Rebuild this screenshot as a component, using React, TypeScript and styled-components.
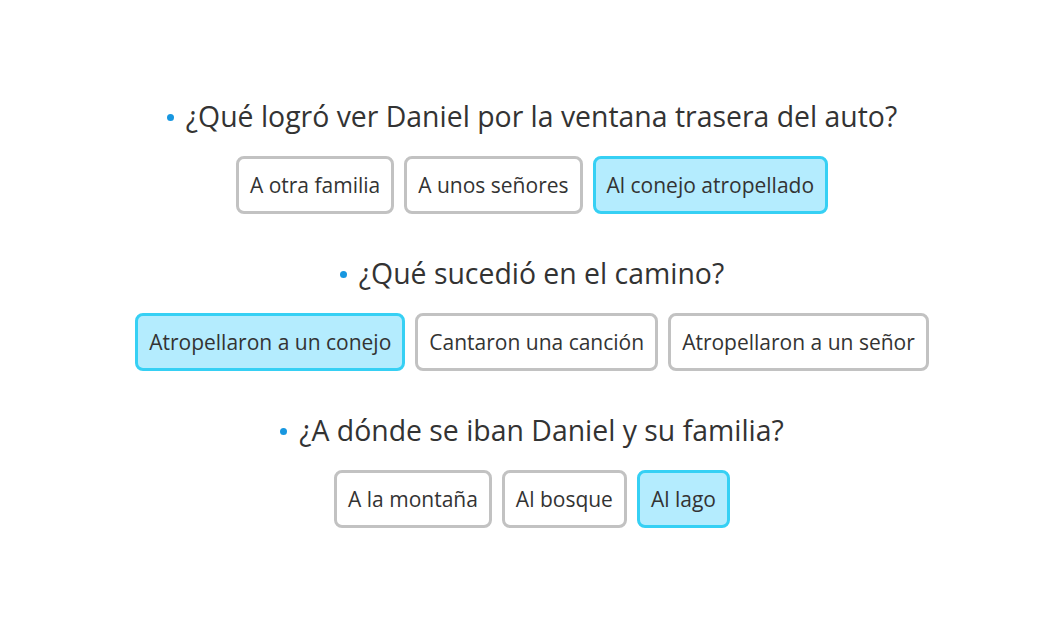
import styled, { createGlobalStyle } from "styled-components";

const GlobalStyle = createGlobalStyle`
  body {
    margin: 0;
    background: #ffffff;
    font-family: "Open Sans", "Noto Sans", sans-serif;
    color: #333333;
  }
`;

type Question = {
  title: string;
  options: string[];
  selected: number;
};

const questions: Question[] = [
  {
    title: "¿Qué logró ver Daniel por la ventana trasera del auto?",
    options: ["A otra familia", "A unos señores", "Al conejo atropellado"],
    selected: 2,
  },
  {
    title: "¿Qué sucedió en el camino?",
    options: [
      "Atropellaron a un conejo",
      "Cantaron una canción",
      "Atropellaron a un señor",
    ],
    selected: 0,
  },
  {
    title: "¿A dónde se iban Daniel y su familia?",
    options: ["A la montaña", "Al bosque", "Al lago"],
    selected: 2,
  },
];

export default function App() {
  return (
    <>
      <GlobalStyle />
      <Quiz>
        {questions.map((q) => (
          <Block key={q.title}>
            <Title>
              <Bullet />
              {q.title}
            </Title>
            <Options>
              {q.options.map((opt, i) => (
                <Option key={opt} $selected={i === q.selected}>
                  {opt}
                </Option>
              ))}
            </Options>
          </Block>
        ))}
      </Quiz>
    </>
  );
}

const Quiz = styled.div`
  display: flex;
  flex-direction: column;
  align-items: center;
  padding: 97px 0 0 10px;
`;

const Block = styled.div`
  display: flex;
  flex-direction: column;
  align-items: center;
  margin-bottom: 40px;
`;

const Title = styled.div`
  display: flex;
  align-items: center;
  font-size: 28.4px;
  line-height: 38px;
  height: 38px;
  margin-bottom: 21px;
  white-space: nowrap;
`;

const Bullet = styled.span`
  width: 7px;
  height: 7px;
  border-radius: 50%;
  background: #1797e0;
  margin-right: 12px;
  margin-top: 2px;
`;

const Options = styled.div`
  display: flex;
  gap: 10px;
`;

const Option = styled.button<{ $selected: boolean }>`
  box-sizing: border-box;
  height: 58px;
  padding: 0 11px;
  border: 3px solid ${(p) => (p.$selected ? "#36d0f4" : "#c2c2c2")};
  border-radius: 8px;
  background: ${(p) => (p.$selected ? "#b4ecfe" : "#ffffff")};
  color: #333333;
  font-family: inherit;
  font-size: 21px;
  white-space: nowrap;
  cursor: pointer;
`;
